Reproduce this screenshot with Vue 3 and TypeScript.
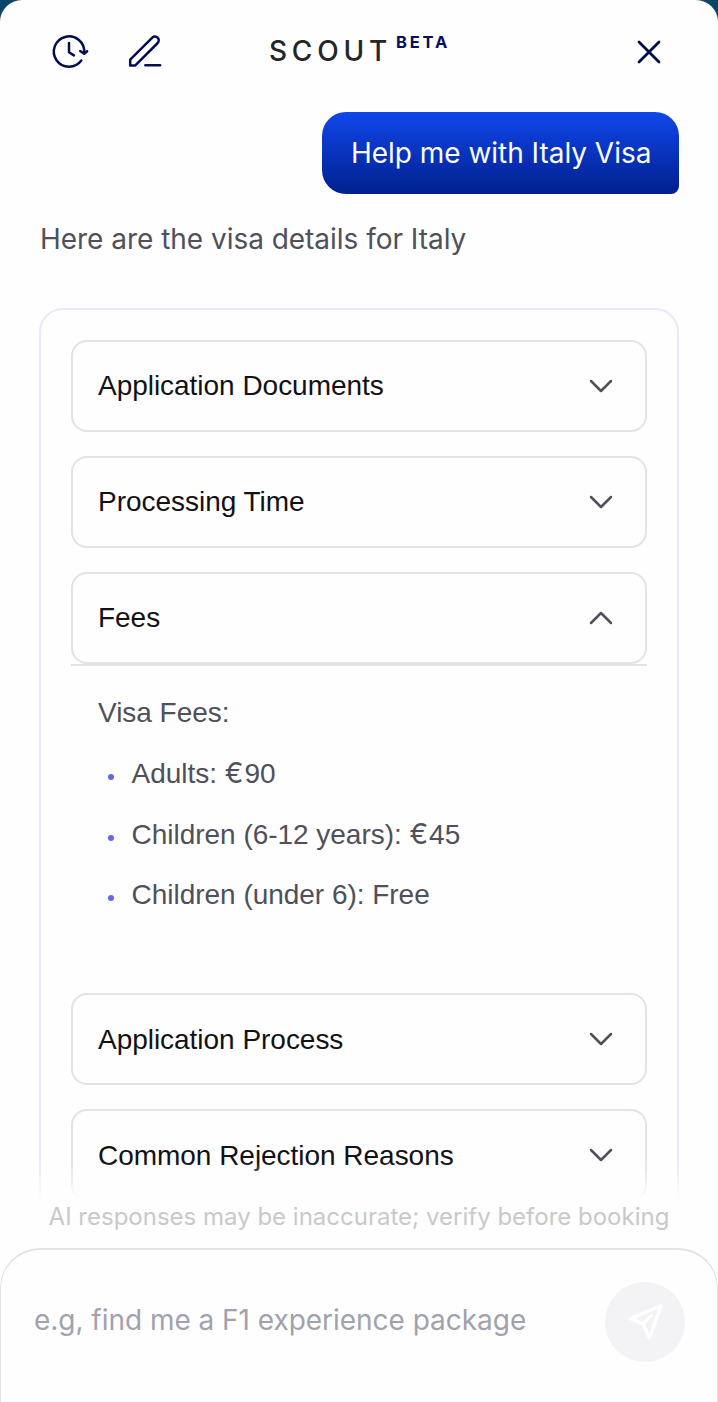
<script setup lang="ts">
import { ref } from 'vue'

interface FeeItem {
  label: string
  currency?: string
  amount?: string
}

interface Section {
  title: string
  intro?: string
  items?: FeeItem[]
}

const sections: Section[] = [
  { title: 'Application Documents' },
  { title: 'Processing Time' },
  {
    title: 'Fees',
    intro: 'Visa Fees:',
    items: [
      { label: 'Adults: ', currency: '€', amount: '90' },
      { label: 'Children (6-12 years): ', currency: '€', amount: '45' },
      { label: 'Children (under 6): Free' },
    ],
  },
  { title: 'Application Process' },
  { title: 'Common Rejection Reasons' },
]

const openTitle = ref<string>('Fees')
const draft = ref<string>('')

function toggle(title: string): void {
  openTitle.value = openTitle.value === title ? '' : title
}
</script>

<template>
  <div class="panel">
    <header class="header">
      <div class="tools">
        <button class="icon-button" aria-label="History">
          <svg width="40" height="40" viewBox="0 0 40 40">
            <path d="M31.3 28.6A15.2 15.2 0 1 1 34.2 20.6" />
            <path d="M30.2 19l4 2.8 2.9-2.6M19 10.9v9.3l4.9 3.2" />
          </svg>
        </button>
        <button class="icon-button" aria-label="New chat">
          <svg width="40" height="40" viewBox="0 0 40 40">
            <path d="M5.2 33.6v-5.9L27.3 5.6a3.82 3.82 0 0 1 5.4 5.4L10.1 33.6z" />
            <path d="M20.4 33.2h14.7" />
          </svg>
        </button>
      </div>
      <h1 class="brand">SCOUT<sup>BETA</sup></h1>
      <button class="icon-button close" aria-label="Close">
        <svg width="24" height="24" viewBox="0 0 24 24">
          <path d="M2 2l20 20M22 2L2 22" />
        </svg>
      </button>
    </header>

    <main class="chat">
      <div class="bubble">Help me with Italy Visa</div>
      <p class="answer">Here are the visa details for Italy</p>
      <div class="card">
        <section v-for="s in sections" :key="s.title" class="section">
          <button class="row" @click="toggle(s.title)">
            <span>{{ s.title }}</span>
            <svg
              class="chevron"
              :class="{ up: openTitle === s.title }"
              width="26"
              height="16"
              viewBox="0 0 26 16"
            >
              <path d="M3 3l10 10L23 3" />
            </svg>
          </button>
          <div v-if="openTitle === s.title && s.items" class="details">
            <p>{{ s.intro }}</p>
            <ul>
              <li v-for="item in s.items" :key="item.label">
                <span class="item-text">{{ item.label }}<span v-if="item.currency" class="currency">{{ item.currency }}</span>{{ item.amount }}</span>
              </li>
            </ul>
          </div>
        </section>
      </div>
      <div class="fade"></div>
    </main>

    <footer class="footer">
      <p class="notice">AI responses may be inaccurate; verify before booking</p>
      <div class="composer">
        <input v-model="draft" class="input" placeholder="e.g, find me a F1 experience package" />
        <button class="send" aria-label="Send">
          <svg width="40" height="40" viewBox="0 0 40 40">
            <path d="M36 3.8L5.6 16.6l12.2 5.2 6.6 14z" />
            <path d="M17.8 21.8l8.6-8.4" />
          </svg>
        </button>
      </div>
    </footer>
  </div>
</template>

<style>
html,
body {
  margin: 0;
  background: #0b4669;
}
</style>

<style scoped>
.panel {
  box-sizing: border-box;
  height: 1402px;
  display: flex;
  flex-direction: column;
  overflow: hidden;
  border-radius: 22px 22px 0 0;
  background: #fefefe;
  font-family: Inter, sans-serif;
  color: #4f505a;
}
button {
  border: 0;
  padding: 0;
  background: none;
  font: inherit;
  cursor: pointer;
}
svg {
  display: block;
  fill: none;
  stroke-linecap: round;
  stroke-linejoin: round;
}
p,
h1,
ul {
  margin: 0;
  padding: 0;
}
.header {
  display: grid;
  grid-template-columns: 1fr auto 1fr;
  align-items: center;
  height: 104px;
  padding: 0 57px 0 50px;
  box-sizing: border-box;
}
.tools {
  display: flex;
  gap: 35px;
}
.icon-button svg {
  stroke: #030e4f;
  stroke-width: 2.5;
}
.close {
  justify-self: end;
}
.close svg {
  stroke-width: 2.8;
}
.brand {
  display: flex;
  align-items: flex-start;
  margin: 0 0 2px 8px;
  font-size: 28px;
  line-height: 35px;
  font-weight: 500;
  letter-spacing: 4.8px;
  color: #232527;
}
.brand sup {
  margin-left: 4px;
  font-size: 16.5px;
  line-height: 17px;
  font-weight: 700;
  letter-spacing: 2.8px;
  color: #06105c;
}
.chat {
  position: relative;
  height: 1096px;
  flex: none;
  box-sizing: border-box;
  overflow: hidden;
  padding: 8px 39px 0;
  display: flex;
  flex-direction: column;
}
.bubble {
  align-self: flex-end;
  box-sizing: border-box;
  width: 357px;
  height: 82px;
  padding-left: 29px;
  border-radius: 24px 24px 8px 24px;
  background: linear-gradient(#1046ec, #00208d);
  color: #fbfcff;
  font-size: 28px;
  line-height: 82px;
  letter-spacing: -0.03px;
  white-space: nowrap;
}
.answer {
  margin: 28px 0 52px 1px;
  font-size: 28px;
  line-height: 34px;
  letter-spacing: -0.03px;
}
.card {
  flex: none;
  display: flex;
  flex-direction: column;
  gap: 24px;
  padding: 30px;
  border: 2px solid #e9e9fb;
  border-radius: 24px;
  font-family: "Liberation Sans", Arial, sans-serif;
  font-size: 28px;
  letter-spacing: -0.03px;
}
.row {
  display: flex;
  align-items: center;
  justify-content: space-between;
  box-sizing: border-box;
  width: 100%;
  height: 92px;
  padding: 0 31px 0 25px;
  border: 2px solid #e3e3e5;
  border-radius: 16px;
  color: #121214;
  letter-spacing: inherit;
  text-align: left;
}
.section:nth-child(n + 4) .row span {
  padding-top: 2px;
}
.chevron {
  stroke: #505058;
  stroke-width: 2.5;
}
.chevron.up {
  transform: rotate(180deg);
}
.details {
  box-sizing: border-box;
  height: 305px;
  padding: 26px 27px 0;
  border-top: 2px solid #e3e3e5;
  line-height: 42px;
}
ul {
  list-style: none;
}
li {
  display: flex;
  align-items: center;
  height: 42px;
  margin-top: 19px;
}
li:last-child {
  margin-top: 18px;
}
li::before {
  content: '';
  width: 6px;
  height: 6px;
  margin: 6px 18px 0 9.6px;
  border-radius: 50%;
  background: #6467ea;
}
.item-text {
  white-space: pre;
}
.currency {
  margin-right: 1px;
  font-family: Inter, sans-serif;
  line-height: 1;
}
.fade {
  position: absolute;
  inset: auto 0 0;
  height: 38px;
  background: linear-gradient(rgba(254, 254, 254, 0), #fefefe);
}
.footer {
  flex: 1;
  display: flex;
  flex-direction: column;
}
.notice {
  height: 48px;
  text-align: center;
  font-size: 24px;
  line-height: 34px;
  color: #c8c9cc;
}
.composer {
  flex: 1;
  display: flex;
  align-items: flex-start;
  padding: 32px 32px 0 33px;
  border: solid #e3e3e5;
  border-width: 2px 1px 0;
  border-radius: 40px 40px 0 0;
}
.input {
  flex: 1;
  min-width: 0;
  height: 76px;
  padding: 0;
  border: 0;
  outline: 0;
  background: none;
  font: 28px Inter, sans-serif;
  letter-spacing: -0.03px;
  color: #4f505a;
}
.input::placeholder {
  color: #a1a2ae;
  opacity: 1;
}
.send {
  display: grid;
  place-items: center;
  width: 80px;
  height: 80px;
  border-radius: 50%;
  background: #f3f3f5;
}
.send svg {
  stroke: #fff;
  stroke-width: 3.5;
}
</style>
